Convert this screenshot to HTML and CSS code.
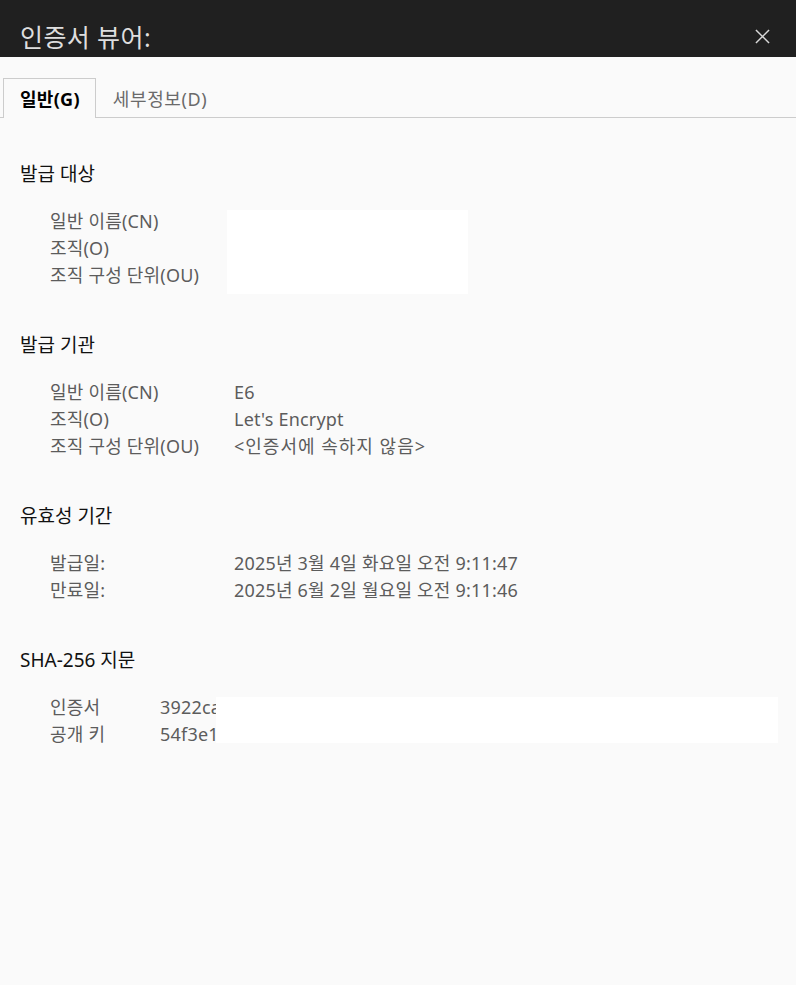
FILE: index.html
```html
<!DOCTYPE html>
<html lang="ko">
<head>
  <meta charset="UTF-8" />
  <meta name="viewport" content="width=device-width, initial-scale=1" />
  <title>인증서 뷰어</title>
  <link rel="stylesheet" href="styles.css">
</head>
<body>
  <header class="titlebar">
    <h1 class="title">인증서 뷰어:</h1>
    <button class="close" aria-label="닫기">
      <svg width="16" height="16" viewBox="0 0 16 16">
        <path d="M1 1 L15 15 M15 1 L1 15" stroke="#d8d8d8" stroke-width="1.6" fill="none"/>
      </svg>
    </button>
  </header>

  <nav class="tabs">
    <div class="tab active">일반(G)</div>
    <div class="tab">세부정보(D)</div>
  </nav>

  <main class="content">
    <section class="group">
      <h2>발급 대상</h2>
      <div class="fields">
        <div class="label">일반 이름(CN)</div><div class="value"></div>
        <div class="label">조직(O)</div><div class="value"></div>
        <div class="label">조직 구성 단위(OU)</div><div class="value"></div>
        <div class="redact redact-subject"></div>
      </div>
    </section>

    <section class="group">
      <h2>발급 기관</h2>
      <div class="fields">
        <div class="label">일반 이름(CN)</div><div class="value">E6</div>
        <div class="label">조직(O)</div><div class="value">Let's Encrypt</div>
        <div class="label">조직 구성 단위(OU)</div><div class="value wide">&lt;인증서에 속하지 않음&gt;</div>
      </div>
    </section>

    <section class="group">
      <h2>유효성 기간</h2>
      <div class="fields">
        <div class="label">발급일:</div><div class="value">2025년 3월 4일 화요일 오전 9:11:47</div>
        <div class="label">만료일:</div><div class="value">2025년 6월 2일 월요일 오전 9:11:46</div>
      </div>
    </section>

    <section class="group">
      <h2>SHA-256 지문</h2>
      <div class="fields fields-narrow">
        <div class="label">인증서</div><div class="value">3922ca</div>
        <div class="label">공개 키</div><div class="value">54f3e1</div>
        <div class="redact redact-hash"></div>
      </div>
    </section>
  </main>
</body>
</html>
```

FILE: styles.css
```css
:root {
  --titlebar-bg: #202020;
  --titlebar-text: #dedede;
  --page-bg: #fafafa;
  --border-color: #cccccc;
  --heading-color: #111111;
  --label-color: #5c5c5c;
}

body {
  margin: 0;
  background: var(--page-bg);
  font-family: 'Noto Sans', 'Noto Sans CJK KR', sans-serif;
  color: var(--label-color);
}

.titlebar {
  height: 57px;
  background: var(--titlebar-bg);
  display: flex;
  align-items: flex-end;
  justify-content: space-between;
  padding: 0 26px 0 20px;
}

.title {
  margin: 0 0 4px;
  font-size: 25px;
  font-weight: 400;
  line-height: 32px;
  letter-spacing: 0.4px;
  color: var(--titlebar-text);
}

.close {
  background: none;
  border: none;
  padding: 0;
  margin-bottom: 13px;
  width: 15px;
  height: 15px;
  cursor: pointer;
}

.close svg {
  width: 15px;
  height: 15px;
}

.tabs {
  display: flex;
  padding: 21px 0 0 3px;
  border-bottom: 1px solid var(--border-color);
}

.tab {
  height: 38px;
  padding: 0 16px;
  font-size: 18px;
  line-height: 40px;
  letter-spacing: 0.6px;
  color: #6a6a6a;
  border: 1px solid transparent;
  border-bottom: none;
}

.tab.active {
  color: #000;
  font-weight: 700;
  padding: 0 15px 0 16px;
  letter-spacing: 0.3px;
  border-color: var(--border-color);
  background: var(--page-bg);
  margin-bottom: -1px;
  height: 39px;
}

.content {
  padding: 42px 20px 0;
}

.group {
  margin-bottom: 42px;
}

.group h2 {
  margin: 0 0 20px;
  font-size: 19px;
  font-weight: 400;
  line-height: 28px;
  color: var(--heading-color);
}

.fields {
  position: relative;
  display: grid;
  grid-template-columns: 184px 1fr;
  padding-left: 30px;
  font-size: 18px;
  line-height: 27px;
  letter-spacing: 0.2px;
}

.fields-narrow {
  grid-template-columns: 110px 1fr;
}

.value {
  color: var(--label-color);
}

.value.wide {
  letter-spacing: 1px;
}

.redact {
  position: absolute;
  background: #ffffff;
}

.redact-subject {
  left: 207px;
  top: 2px;
  width: 241px;
  height: 84px;
}

.redact-hash {
  left: 196px;
  top: 3px;
  width: 562px;
  height: 46px;
}
```
